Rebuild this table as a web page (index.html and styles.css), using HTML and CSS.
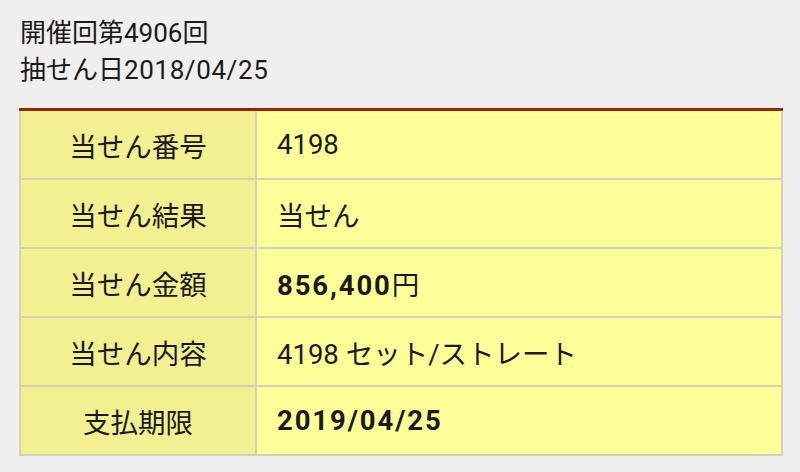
FILE: index.html
```html
<!DOCTYPE html>
<html lang="ja">
<head>
<meta charset="utf-8">
<link rel="stylesheet" href="styles.css">
</head>
<body>
<div class="info">
  <div class="line">開催回第4906回</div>
  <div class="line">抽せん日<span class="date">2018/04/25</span></div>
</div>
<table class="result">
  <tr><th>当せん番号</th><td>4198</td></tr>
  <tr><th>当せん結果</th><td>当せん</td></tr>
  <tr><th>当せん金額</th><td><b>856,400</b>円</td></tr>
  <tr><th>当せん内容</th><td>4198 セット/ストレート</td></tr>
  <tr><th>支払期限</th><td><b>2019/04/25</b></td></tr>
</table>
</body>
</html>
```

FILE: styles.css
```css
html, body {
  margin: 0;
  padding: 0;
  background: #efefef;
}
body {
  font-family: Roboto, "Noto Sans CJK JP", sans-serif;
  color: #1a1a1a;
  padding: 15px 19px 0 19px;
}
.info {
  font-size: 26px;
  line-height: 37px;
  padding-left: 1px;
  margin-bottom: 19px;
}
.date {
  letter-spacing: 0.6px;
}
.result {
  width: 764px;
  border-collapse: collapse;
  border-top: 3px solid #9a2612;
  font-size: 27.5px;
}
.result th, .result td {
  border: 2px solid #d2d2b4;
  height: 67px;
  padding: 0;
}
.result tr:first-child th, .result tr:first-child td {
  border-top: none;
}
.result th {
  width: 234px;
  background: #f2f091;
  font-weight: normal;
  text-align: center;
}
.result td {
  background: #ffff99;
  text-align: left;
  padding-left: 20px;
}
.result b {
  font-weight: bold;
  letter-spacing: 1.9px;
}
```
